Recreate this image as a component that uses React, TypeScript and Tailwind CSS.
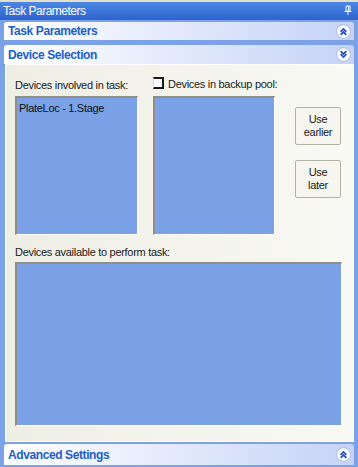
import React from 'react';

const font = { fontFamily: '"Liberation Sans", Arial, sans-serif' };

function Chevrons({ up }: { up: boolean }) {
    const d = up ? 'M4.3 7.3 L7 4.6 L9.7 7.3 M4.3 10.2 L7 7.5 L9.7 10.2' : 'M4.3 3.8 L7 6.5 L9.7 3.8 M4.3 6.7 L7 9.4 L9.7 6.7';
    return (
        <svg width="15" height="15" viewBox="0 0 14 14" className="shrink-0">
            <circle cx="7" cy="7" r="6.4" fill="#ffffff" stroke="#b3c2e6" strokeWidth="1" />
            <path d={d} fill="none" stroke="#2150bd" strokeWidth="1.6" />
        </svg>
    );
}

function Pin() {
    return (
        <svg width="8" height="10" viewBox="0 0 8 10">
            <path d="M2 1 H6 V6 H2 Z" fill="none" stroke="#ffffff" strokeWidth="1" />
            <path d="M4.5 1.5 V5.5" stroke="#ffffff" strokeWidth="1" />
            <path d="M0.5 6.5 H7.5" stroke="#ffffff" strokeWidth="1" />
            <path d="M4 7 V10" stroke="#ffffff" strokeWidth="1" />
        </svg>
    );
}

function SectionHeader({ title, up, className = '' }: { title: string; up: boolean; className?: string }) {
    return (
        <div className={`flex items-center justify-between pl-[4px] pr-[3px] rounded-t-[3px] bg-gradient-to-r from-white to-[#c6d3f7] ${className}`}>
            <span className="text-[12px] font-bold text-[#215dc6] tracking-[-0.4px]">{title}</span>
            <Chevrons up={up} />
        </div>
    );
}

function ListBox({ className = '', children }: { className?: string; children?: React.ReactNode }) {
    return (
        <div className={`bg-[#7ba2e6] border-t-2 border-l-2 border-[#8f8f8a] border-r border-b border-r-white border-b-white px-[2px] pt-[2px] text-[11px] text-[#101010] ${className}`}>
            {children}
        </div>
    );
}

function XpButton({ lines }: { lines: string[] }) {
    return (
        <button className="w-[46px] h-[38px] flex flex-col items-center justify-center bg-[#f6f5ef] border border-[#b4b3a3] rounded-[2px] text-[11px] leading-[13px] text-[#1a1a1a]">
            {lines.map((l) => (
                <span key={l}>{l}</span>
            ))}
        </button>
    );
}

export default function App() {
    return (
        <div className="w-[358px] h-[467px] bg-[#7ba2e6] flex flex-col overflow-hidden" style={font}>
            <div className="h-[2px] bg-[#e2dfcb]" />
            <div className="h-[18px] flex items-center justify-between px-[3px] bg-gradient-to-b from-[#4b87e2] to-[#2d62d0]">
                <span className="text-[12px] text-white tracking-[-0.5px]">Task Parameters</span>
                <span className="pr-[3px] pb-[2px]"><Pin /></span>
            </div>

            <div className="flex flex-col pl-[4px] pr-[4px] pt-[2px]">
                <SectionHeader title="Task Parameters" up className="h-[18px]" />
                <SectionHeader title="Device Selection" up={false} className="h-[19px] mt-[5px]" />

                <div className="h-[378px] ml-[1px] border border-white bg-gradient-to-r from-[#efeee5] to-[#f9f9f5] pl-[9px] pt-[14px] text-[11px] text-[#1a1a1a] tracking-[-0.3px]">
                    <div className="flex">
                        <div className="flex flex-col w-[123px]">
                            <span className="h-[17px] leading-[13px] whitespace-nowrap">Devices involved in task:</span>
                            <ListBox className="h-[139px]">PlateLoc - 1.Stage</ListBox>
                        </div>
                        <div className="flex flex-col w-[122px] ml-[15px]">
                            <div className="h-[17px] flex items-start gap-[4px] -mt-[2px]">
                                <span className="shrink-0 w-[11px] h-[12px] border-t-2 border-r-2 border-b-2 border-l border-[#1a1a1a] border-l-[#d8d8d0] bg-white" />
                                <span className="whitespace-nowrap leading-[13px] mt-[1px]">Devices in backup pool:</span>
                            </div>
                            <ListBox className="h-[139px] mt-[2px]" />
                        </div>
                        <div className="flex flex-col ml-[20px] pt-[28px] gap-[15px]">
                            <XpButton lines={['Use', 'earlier']} />
                            <XpButton lines={['Use', 'later']} />
                        </div>
                    </div>
                    <div className="mt-[11px] h-[16px] leading-[13px]">Devices available to perform task:</div>
                    <ListBox className="w-[327px] h-[164px]" />
                </div>

                <SectionHeader title="Advanced Settings" up className="h-[21px] mt-[2px]" />
            </div>
        </div>
    );
}
